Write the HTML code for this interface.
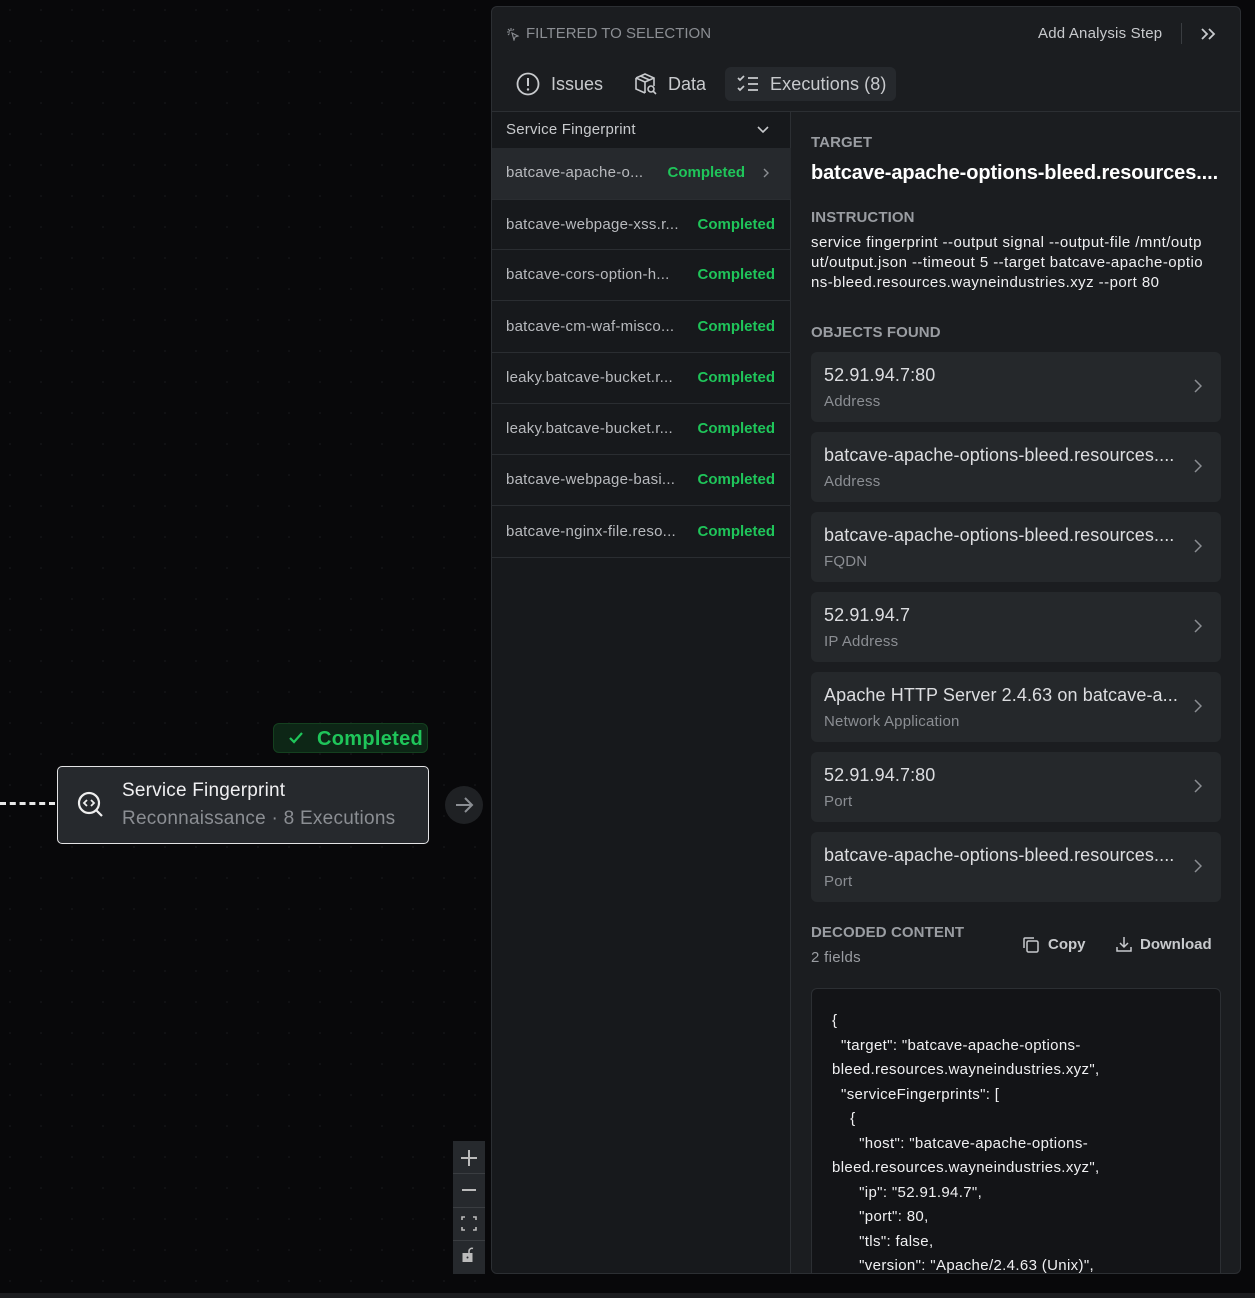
<!DOCTYPE html>
<html><head><meta charset="utf-8"><style>
*{box-sizing:border-box;margin:0;padding:0}
body{width:1255px;height:1298px;background:#08080a;font-family:"Liberation Sans",sans-serif;position:relative;overflow:hidden;color:#e6e7e9}
.a{position:absolute;white-space:nowrap}
.panel{position:absolute;left:491px;top:6px;width:750px;height:1268px;background:#1b1d20;border:1px solid #2c2f33;border-radius:6px;overflow:hidden}
.lbl{font-size:15px;font-weight:bold;color:#9a9da2;letter-spacing:.1px}
.row{position:absolute;left:0;width:299px;height:51px;border-bottom:1px solid #2a2d31;font-size:15px}
.row .n{position:absolute;left:15px;top:16px;color:#b8babe;letter-spacing:.25px}
.row .s{position:absolute;right:16px;top:16px;color:#1fc55a;font-weight:bold}
.card{position:absolute;left:319px;width:410px;height:70px;background:#25282b;border-radius:6px}
.card .t{position:absolute;left:13px;top:13px;font-size:18px;color:#dcdde0;letter-spacing:.1px}
.card .st{position:absolute;left:13px;top:41px;font-size:15px;color:#8b8e93;letter-spacing:.2px}
.card .ch{position:absolute;right:19px;top:27px}
.code{font-size:15px;line-height:24.5px;color:#f0f0f2;letter-spacing:.35px}
</style></head><body>
<svg class="a" style="left:0;top:0" width="491" height="1298"><defs><pattern id="p" width="31" height="31" patternUnits="userSpaceOnUse"><circle cx="10" cy="10" r="0.8" fill="#1a1b1e"/></pattern></defs><rect width="491" height="1298" fill="url(#p)"/></svg>
<div class="a" style="left:0;top:1293px;width:1255px;height:5px;background:#1c1d20"></div>
<div class="a" style="left:0;top:802px;width:55px;border-top:3px dashed #e8e8e8"></div>
<div class="a" style="left:273px;top:723px;width:155px;height:30px;background:#0d2616;border:1px solid #14401f;border-radius:6px;color:#1fc55a;font-size:20px;font-weight:bold">
<svg class="a" style="left:14px;top:7px" width="16" height="14" viewBox="0 0 16 14"><path d="M2 7l4 4 8-9" stroke="#1fc55a" stroke-width="2.2" fill="none"/></svg>
<span class="a" style="left:43px;top:4px;letter-spacing:.3px">Completed</span></div>
<div class="a" style="left:57px;top:766px;width:372px;height:78px;background:#26292d;border:1.5px solid #e4e4e6;border-radius:5px">
<svg class="a" style="left:19px;top:24px" width="28" height="28" viewBox="0 0 28 28"><circle cx="12" cy="12" r="10" stroke="#eee" stroke-width="2.2" fill="none"/><path d="M19 19l6 6" stroke="#eee" stroke-width="2.2"/><path d="M10 9l-3 3 3 3M14 9l3 3-3 3" stroke="#eee" stroke-width="1.8" fill="none"/></svg>
<span class="a" style="left:64px;top:13px;font-size:19px;color:#f0f0f2;letter-spacing:.2px">Service Fingerprint</span>
<span class="a" style="left:64px;top:41px;font-size:19px;color:#8b8e93;letter-spacing:.25px">Reconnaissance · 8 Executions</span></div>
<div class="a" style="left:445px;top:786px;width:38px;height:38px;border-radius:50%;background:#1f2124"></div>
<svg class="a" style="left:453px;top:794px" width="22" height="22" viewBox="0 0 22 22"><path d="M3 11h16M12 4l7 7-7 7" stroke="#8b8e93" stroke-width="2" fill="none"/></svg>
<div class="a" style="left:453px;top:1141px;width:32px;height:133px;background:#26292d">
<div class="a" style="left:0;top:32px;width:32px;border-top:1px solid #3a3d41"></div>
<div class="a" style="left:0;top:66px;width:32px;border-top:1px solid #3a3d41"></div>
<div class="a" style="left:0;top:99px;width:32px;border-top:1px solid #3a3d41"></div>
<svg class="a" style="left:0;top:0" width="32" height="133"><path d="M16 9v16M8 17h16" stroke="#bbb" stroke-width="2"/><path d="M9 49h14" stroke="#bbb" stroke-width="2"/><path d="M9 79v-3h3M20 76h3v3M23 86v3h-3M12 89h-3v-3" stroke="#bbb" stroke-width="1.6" fill="none"/><rect x="9.5" y="112" width="10" height="9" fill="#bbb"/><circle cx="14.5" cy="116.5" r="1" fill="#26292d"/><path d="M16 112v-2a3 3 0 0 1 4 -2.5" stroke="#bbb" stroke-width="1.5" fill="none"/></svg></div>

<div class="panel">
<svg class="a" style="left:14px;top:20px" width="14" height="14" viewBox="0 0 14 14"><path d="M5 1v3M1 5h3M2 2l2 2M8 2l-1.5 1.5M2 8l1.5-1.5M6 6l6 3-3 1-1 3z" stroke="#8b8e93" stroke-width="1.1" fill="none"/></svg>
<span class="a" style="left:34px;top:18px;font-size:15px;color:#8b8e93">FILTERED TO SELECTION</span>
<span class="a" style="left:546px;top:18px;font-size:15px;color:#c8cacd;letter-spacing:.2px">Add Analysis Step</span>
<div class="a" style="left:689px;top:16px;height:21px;border-left:1px solid #3a3d41"></div>
<svg class="a" style="left:708px;top:20px" width="18" height="14" viewBox="0 0 18 14"><path d="M2 2l5 5-5 5M9 2l5 5-5 5" stroke="#c8cacd" stroke-width="1.8" fill="none"/></svg>
<svg class="a" style="left:24px;top:65px" width="24" height="24" viewBox="0 0 24 24"><circle cx="12" cy="12" r="10.5" stroke="#c8cacd" stroke-width="1.8" fill="none"/><path d="M12 6v8" stroke="#c8cacd" stroke-width="2"/><circle cx="12" cy="17.5" r="1.2" fill="#c8cacd"/></svg>
<span class="a" style="left:59px;top:67px;font-size:18px;color:#c8cacd">Issues</span>
<svg class="a" style="left:141px;top:64px" width="26" height="26" viewBox="0 0 26 26"><path d="M3 7l9-4 9 4v8M3 7v11l9 4M3 7l9 4 9-4M12 11v11M7.5 5l9 4" stroke="#c8cacd" stroke-width="1.6" fill="none"/><circle cx="18" cy="18" r="3" stroke="#c8cacd" stroke-width="1.6" fill="none"/><path d="M20 20l3 3" stroke="#c8cacd" stroke-width="1.6"/></svg>
<span class="a" style="left:176px;top:67px;font-size:18px;color:#c8cacd">Data</span>
<div class="a" style="left:233px;top:60px;width:171px;height:34px;background:#26292d;border-radius:6px"></div>
<svg class="a" style="left:244px;top:66px" width="24" height="22" viewBox="0 0 24 22"><path d="M2 5l2 2 4-4M2 15l2 2 4-4M12 5h10M12 11h10M12 17h10" stroke="#c8cacd" stroke-width="1.7" fill="none"/></svg>
<span class="a" style="left:278px;top:67px;font-size:18px;color:#c8cacd;letter-spacing:.1px">Executions (8)</span>
<div class="a" style="left:0;top:104px;width:750px;border-top:1px solid #2c2f33"></div>
<div class="a" style="left:0;top:105px;width:299px;height:1163px;background:#17191c;border-right:1px solid #2c2f33"></div>
<span class="a" style="left:14px;top:114px;font-size:15px;color:#c8cacd;letter-spacing:.2px">Service Fingerprint</span>
<svg class="a" style="left:264px;top:118px" width="14" height="10" viewBox="0 0 14 10"><path d="M2 2l5 5 5-5" stroke="#c8cacd" stroke-width="1.6" fill="none"/></svg>
<div class="row" style="top:141px;background:#26292d;border-bottom:none"><span class="n" style="left:14px">batcave-apache-o...</span><span class="s" style="right:46px">Completed</span><svg class="a" style="left:270px;top:19px" width="8" height="12" viewBox="0 0 8 12"><path d="M2 2l4 4-4 4" stroke="#8b8e93" stroke-width="1.4" fill="none"/></svg></div>
<div class="row" style="top:192px;border-top:1px solid #2a2d31"><span class="n" style="left:14px">batcave-webpage-xss.r...</span><span class="s">Completed</span></div>
<div class="row" style="top:243px"><span class="n" style="left:14px">batcave-cors-option-h...</span><span class="s">Completed</span></div>
<div class="row" style="top:295px"><span class="n" style="left:14px">batcave-cm-waf-misco...</span><span class="s">Completed</span></div>
<div class="row" style="top:346px"><span class="n" style="left:14px">leaky.batcave-bucket.r...</span><span class="s">Completed</span></div>
<div class="row" style="top:397px"><span class="n" style="left:14px">leaky.batcave-bucket.r...</span><span class="s">Completed</span></div>
<div class="row" style="top:448px"><span class="n" style="left:14px">batcave-webpage-basi...</span><span class="s">Completed</span></div>
<div class="row" style="top:500px"><span class="n" style="left:14px">batcave-nginx-file.reso...</span><span class="s">Completed</span></div>
<span class="a lbl" style="left:319px;top:127px">TARGET</span>
<span class="a" style="left:319px;top:155px;font-size:20px;font-weight:bold;color:#fff;letter-spacing:-.1px">batcave-apache-options-bleed.resources....</span>
<span class="a lbl" style="left:319px;top:202px">INSTRUCTION</span>
<div class="a" style="left:319px;top:226px;font-size:15px;line-height:20px;color:#f0f0f2;letter-spacing:.45px">service fingerprint --output signal --output-file /mnt/outp<br>ut/output.json --timeout 5 --target batcave-apache-optio<br>ns-bleed.resources.wayneindustries.xyz --port 80</div>
<span class="a lbl" style="left:319px;top:317px">OBJECTS FOUND</span>
<div class="card" style="top:345px"><span class="t">52.91.94.7:80</span><span class="st">Address</span><svg class="ch" width="8" height="14" viewBox="0 0 8 14"><path d="M1 1l6 6-6 6" stroke="#8b8e93" stroke-width="1.5" fill="none"/></svg></div>
<div class="card" style="top:425px"><span class="t">batcave-apache-options-bleed.resources....</span><span class="st">Address</span><svg class="ch" width="8" height="14" viewBox="0 0 8 14"><path d="M1 1l6 6-6 6" stroke="#8b8e93" stroke-width="1.5" fill="none"/></svg></div>
<div class="card" style="top:505px"><span class="t">batcave-apache-options-bleed.resources....</span><span class="st">FQDN</span><svg class="ch" width="8" height="14" viewBox="0 0 8 14"><path d="M1 1l6 6-6 6" stroke="#8b8e93" stroke-width="1.5" fill="none"/></svg></div>
<div class="card" style="top:585px"><span class="t">52.91.94.7</span><span class="st">IP Address</span><svg class="ch" width="8" height="14" viewBox="0 0 8 14"><path d="M1 1l6 6-6 6" stroke="#8b8e93" stroke-width="1.5" fill="none"/></svg></div>
<div class="card" style="top:665px"><span class="t">Apache HTTP Server 2.4.63 on batcave-a...</span><span class="st">Network Application</span><svg class="ch" width="8" height="14" viewBox="0 0 8 14"><path d="M1 1l6 6-6 6" stroke="#8b8e93" stroke-width="1.5" fill="none"/></svg></div>
<div class="card" style="top:745px"><span class="t">52.91.94.7:80</span><span class="st">Port</span><svg class="ch" width="8" height="14" viewBox="0 0 8 14"><path d="M1 1l6 6-6 6" stroke="#8b8e93" stroke-width="1.5" fill="none"/></svg></div>
<div class="card" style="top:825px"><span class="t">batcave-apache-options-bleed.resources....</span><span class="st">Port</span><svg class="ch" width="8" height="14" viewBox="0 0 8 14"><path d="M1 1l6 6-6 6" stroke="#8b8e93" stroke-width="1.5" fill="none"/></svg></div>
<span class="a lbl" style="left:319px;top:917px">DECODED CONTENT</span>
<span class="a" style="left:319px;top:942px;font-size:15px;color:#9a9da2;letter-spacing:.3px">2 fields</span>
<svg class="a" style="left:530px;top:929px" width="18" height="18" viewBox="0 0 18 18"><rect x="5" y="5" width="11" height="11" rx="1.5" stroke="#c8cacd" stroke-width="1.5" fill="none"/><path d="M2 12V3a1 1 0 0 1 1-1h9" stroke="#c8cacd" stroke-width="1.5" fill="none"/></svg>
<span class="a" style="left:556px;top:929px;font-size:15px;font-weight:bold;color:#c8cacd">Copy</span>
<svg class="a" style="left:623px;top:928px" width="18" height="18" viewBox="0 0 18 18"><path d="M9 2v10M5 8l4 4 4-4M2 12v4h14v-4" stroke="#c8cacd" stroke-width="1.5" fill="none"/></svg>
<span class="a" style="left:648px;top:929px;font-size:15px;font-weight:bold;color:#c8cacd">Download</span>
<div class="a" style="left:319px;top:981px;width:410px;height:320px;background:#131417;border:1px solid #2c2f33;border-radius:6px"></div>
<div class="a code" style="left:340px;top:1002px">{<br>&nbsp;&nbsp;"target": "batcave-apache-options-<br>bleed.resources.wayneindustries.xyz",<br>&nbsp;&nbsp;"serviceFingerprints": [<br>&nbsp;&nbsp;&nbsp;&nbsp;{<br>&nbsp;&nbsp;&nbsp;&nbsp;&nbsp;&nbsp;"host": "batcave-apache-options-<br>bleed.resources.wayneindustries.xyz",<br>&nbsp;&nbsp;&nbsp;&nbsp;&nbsp;&nbsp;"ip": "52.91.94.7",<br>&nbsp;&nbsp;&nbsp;&nbsp;&nbsp;&nbsp;"port": 80,<br>&nbsp;&nbsp;&nbsp;&nbsp;&nbsp;&nbsp;"tls": false,<br>&nbsp;&nbsp;&nbsp;&nbsp;&nbsp;&nbsp;"version": "Apache/2.4.63 (Unix)",</div>
</div>
</body></html>
